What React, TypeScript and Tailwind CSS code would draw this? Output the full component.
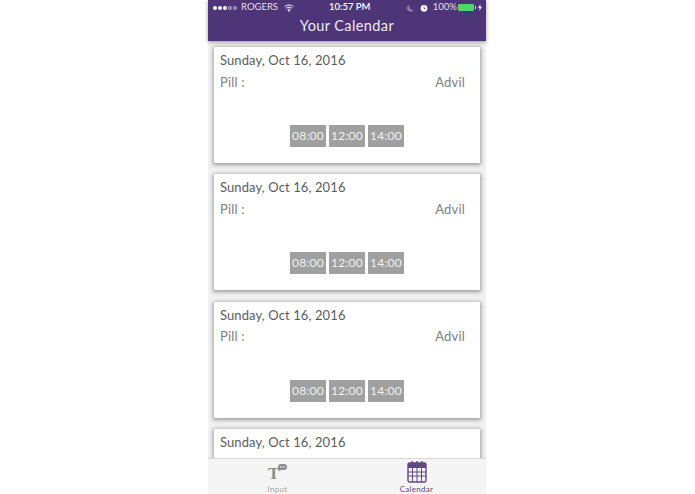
const times = ['08:00', '12:00', '14:00'];

const StatusBar = () => (
  <div className="relative flex h-[15px] items-center justify-between pl-[5px] pr-[4px] text-[9.5px] text-[#e4deee]">
    <div className="flex items-center gap-[4px]">
      <div className="flex items-center gap-[1px]">
        <span className="h-[4px] w-[4px] rounded-full bg-white" />
        <span className="h-[4px] w-[4px] rounded-full bg-white" />
        <span className="h-[4px] w-[4px] rounded-full bg-white" />
        <span className="h-[4px] w-[4px] rounded-full border-[0.5px] border-[#c9bfdb]" />
        <span className="h-[4px] w-[4px] rounded-full border-[0.5px] border-[#c9bfdb]" />
      </div>
      <span>ROGERS</span>
      <svg width="10" height="8" viewBox="0 0 10 8" className="ml-[2px]" fill="none" stroke="#fff" strokeWidth="1">
        <path d="M0.5 2.8C3 0.4 7 0.4 9.5 2.8" />
        <path d="M2 4.3C3.7 2.8 6.3 2.8 8 4.3" />
        <path d="M3.5 5.7C4.4 5 5.6 5 6.5 5.7" />
        <path d="M5 8L3.9 6.7C4.5 6.2 5.5 6.2 6.1 6.7Z" fill="#fff" stroke="none" />
      </svg>
    </div>
    <span className="absolute left-[121px] w-[40px] text-center font-semibold whitespace-nowrap text-white">10:57 PM</span>
    <div className="flex items-center">
      <svg width="7" height="8" viewBox="0 0 7 8" className="mr-[6px]">
        <path d="M2.5 0.5A3.7 3.7 0 1 0 6.8 6A4 4 0 0 1 2.5 0.5Z" fill="#8f82ad" />
      </svg>
      <svg width="8" height="8" viewBox="0 0 8 8" className="mr-[5px]">
        <circle cx="4" cy="4.3" r="3.4" fill="#fff" />
        <path d="M4 2.5V4.5H5.5" stroke="#4d3577" strokeWidth="0.8" fill="none" />
      </svg>
      <span>100%</span>
      <div className="ml-[1px] h-[7px] w-[16px] rounded-[1px] bg-[#4cd964]" />
      <div className="ml-[1px] h-[3px] w-[1px] bg-[#d8d2e4]" />
      <svg width="4" height="7" viewBox="0 0 4 7" className="ml-[2px]">
        <path d="M2.5 0L0 4H1.7L1.2 7L4 2.8H2.2Z" fill="#fff" />
      </svg>
    </div>
  </div>
);

const Card = ({ dateOnly = false }: { dateOnly?: boolean }) => (
  <div className="h-[116px] w-[266px] shrink-0 bg-white px-[6px] pt-[5px] shadow-[0_1px_4px_1px_rgba(0,0,0,0.36)]">
    <div className="text-[13px] leading-[16px] tracking-[0.1px] text-[#5c5c5c]">Sunday, Oct 16, 2016</div>
    {!dateOnly && (
      <>
        <div className="mt-[5.5px] flex justify-between pr-[9px] text-[13px] leading-[16px] tracking-[0.2px] text-[#808080]">
          <span>Pill :</span>
          <span>Advil</span>
        </div>
        <div className="mt-[35.5px] flex justify-center gap-[3.5px]">
          {times.map((t) => (
            <div key={t} className="flex h-[22px] w-[35.5px] items-center justify-center bg-[#a0a0a0] text-[12px] tracking-[0.2px] text-[#f2f2f2]">
              {t}
            </div>
          ))}
        </div>
      </>
    )}
  </div>
);

const App: React.FC = () => {
  return (
    <div className="flex h-[494px] w-[695px] justify-center overflow-hidden bg-white font-['Lato',sans-serif]">
      <div className="ml-[-1px] flex h-full w-[278px] flex-col bg-[#f2f2f2]">
        <div className="z-10 h-[41px] shrink-0 bg-[#4d3577] shadow-[0_1px_4px_rgba(0,0,0,0.4)]">
          <StatusBar />
          <div className="text-center text-[14.5px] leading-[22px] tracking-[0.4px] text-[#eeeaf4]">Your Calendar</div>
        </div>
        <div className="flex min-h-0 flex-1 flex-col items-center gap-[11.4px] overflow-hidden pt-[6px]">
          <Card />
          <Card />
          <Card />
          <Card dateOnly />
        </div>
        <div className="z-10 flex h-[36px] shrink-0 border-t border-[#d8d8d8] bg-[#f5f5f5]">
          <div className="flex flex-1 flex-col items-center pt-[3px] text-[#a3a3a3]">
            <svg width="20" height="22" viewBox="0 0 20 22">
              <text x="0" y="17" fontFamily="Liberation Serif" fontWeight="700" fontSize="17" fill="#8c8c8c">T</text>
              <rect x="10" y="2" width="9" height="6" rx="3" fill="#8c8c8c" />
              <path d="M11.5 7L11 9.5L14 7Z" fill="#8c8c8c" />
              <circle cx="12.5" cy="5" r="0.7" fill="#f5f5f5" />
              <circle cx="14.5" cy="5" r="0.7" fill="#f5f5f5" />
              <circle cx="16.5" cy="5" r="0.7" fill="#f5f5f5" />
            </svg>
            <span className="text-[8px] leading-[10px] tracking-[0.3px]">Input</span>
          </div>
          <div className="flex flex-1 flex-col items-center text-[#5f4a86]">
            <svg width="20" height="23" viewBox="0 0 20 23" className="mt-[1px]">
              <rect x="1" y="3" width="18" height="19" rx="1.5" fill="none" stroke="#5f4a86" strokeWidth="1.4" />
              <rect x="1" y="3" width="18" height="5" fill="#5f4a86" />
              <path d="M5 1V5M10 1V5M15 1V5" stroke="#5f4a86" strokeWidth="1.4" />
              <path d="M1 12H19M1 16H19M5.5 8V22M10 8V22M14.5 8V22" stroke="#5f4a86" strokeWidth="1" />
            </svg>
            <span className="mt-[1px] text-[8px] leading-[10px] tracking-[0.3px]">Calendar</span>
          </div>
        </div>
      </div>
    </div>
  );
};

export default App;
